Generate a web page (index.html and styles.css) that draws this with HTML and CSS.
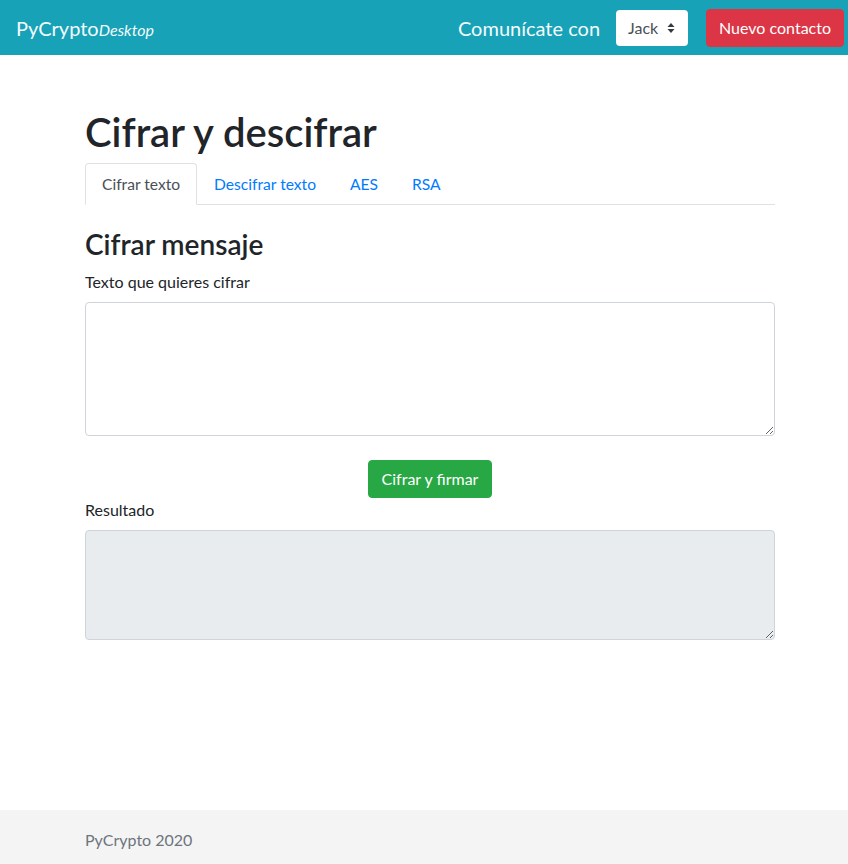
FILE: index.html
```html
<!DOCTYPE html>
<html lang="es">
<head>
<meta charset="utf-8">
<title>PyCrypto Desktop</title>
<link rel="stylesheet" href="styles.css">
</head>
<body>
<div class="page">
  <nav class="navbar">
    <a class="brand" href="#">PyCrypto<span class="brand-sub">Desktop</span></a>
    <div class="nav-right">
      <span class="nav-text">Comunícate con</span>
      <div class="select">
        <span>Jack</span>
        <svg class="select-arrows" width="8" height="12" viewBox="0 0 8 12"><path d="M4 1 L7.5 5 H0.5 Z M4 11 L0.5 7 H7.5 Z" fill="#343a40"/></svg>
      </div>
      <button class="btn btn-danger">Nuevo contacto</button>
    </div>
  </nav>

  <main class="main">
    <h1 class="title">Cifrar y descifrar</h1>
    <ul class="tabs">
      <li class="tab active">Cifrar texto</li>
      <li class="tab">Descifrar texto</li>
      <li class="tab">AES</li>
      <li class="tab">RSA</li>
    </ul>
    <section class="pane">
      <h2 class="subtitle">Cifrar mensaje</h2>
      <div class="form-group">
        <label class="label">Texto que quieres cifrar</label>
        <textarea class="control" rows="5"></textarea>
      </div>
      <div class="center">
        <button class="btn btn-success">Cifrar y firmar</button>
      </div>
      <div class="form-group">
        <label class="label">Resultado</label>
        <textarea class="control readonly" rows="4" readonly></textarea>
      </div>
    </section>
  </main>

  <footer class="footer">
    <span>PyCrypto 2020</span>
  </footer>
</div>
</body>
</html>
```
FILE: styles.css
```css
* { box-sizing: border-box; }
html, body { margin: 0; padding: 0; }
body {
  font-family: Lato, "Open Sans", sans-serif;
  font-size: 16px;
  line-height: 1.5;
  color: #212529;
  background: #fff;
}
.page {
  min-height: 100vh;
  display: flex;
  flex-direction: column;
}
.navbar {
  height: 55px;
  background: #17a2b8;
  display: flex;
  align-items: center;
  justify-content: space-between;
  padding: 0 4px 0 16px;
}
.brand {
  color: #f4fbfc;
  text-decoration: none;
  font-size: 20px;
}
.brand-sub {
  font-style: italic;
  font-size: 16px;
}
.nav-right {
  display: flex;
  align-items: center;
}
.nav-text {
  color: #f4fbfc;
  font-size: 20px;
  margin-right: 16px;
}
.select {
  width: 72px;
  height: 36px;
  background: #fff;
  border-radius: 4px;
  display: flex;
  align-items: center;
  justify-content: space-between;
  padding: 0 13px 0 12px;
  color: #495057;
  margin-right: 18px;
}
.btn {
  font-family: inherit;
  font-size: 16px;
  line-height: 1.5;
  border: 1px solid transparent;
  border-radius: 4px;
  padding: 6px 12px;
  color: #fff;
  cursor: pointer;
}
.btn-danger {
  background: #dc3545;
  border-color: #dc3545;
  height: 38px;
}
.btn-success {
  background: #28a745;
  border-color: #28a745;
  padding: 6px 13px;
}
.main {
  flex: 1;
  width: 690px;
  margin-left: 85px;
  padding-top: 53px;
}
.title {
  font-size: 40px;
  font-weight: 600;
  line-height: 1.2;
  margin: 0 0 7px;
}
.tabs {
  list-style: none;
  margin: 0;
  padding: 0;
  display: flex;
  border-bottom: 1px solid #dee2e6;
}
.tab {
  padding: 8px 16px;
  font-size: 15.6px;
  line-height: 24px;
  color: #007bff;
  border: 1px solid transparent;
  border-top-left-radius: 4px;
  border-top-right-radius: 4px;
  margin-bottom: -1px;
}
.tab.active {
  color: #495057;
  border-color: #dee2e6 #dee2e6 #fff;
  background: #fff;
}
.pane {
  padding-top: 23px;
}
.subtitle {
  font-size: 28px;
  font-weight: 600;
  line-height: 1.2;
  margin: 0 0 8px;
}
.form-group {
  margin-bottom: 16px;
}
.label {
  display: block;
  margin-bottom: 8px;
}
.control {
  display: block;
  width: 100%;
  font-family: inherit;
  font-size: 16px;
  line-height: 1.5;
  padding: 6px 12px;
  border: 1px solid #ced4da;
  border-radius: 4px;
  color: #495057;
  background: #fff;
}
.control.readonly {
  background: #e9ecef;
}
.center {
  display: flex;
  justify-content: center;
  margin-top: 24px;
  margin-bottom: 0;
}
.footer {
  background: #f4f4f4;
  color: #6c757d;
  padding: 18px 85px 12px;
  height: 54px;
}
```
